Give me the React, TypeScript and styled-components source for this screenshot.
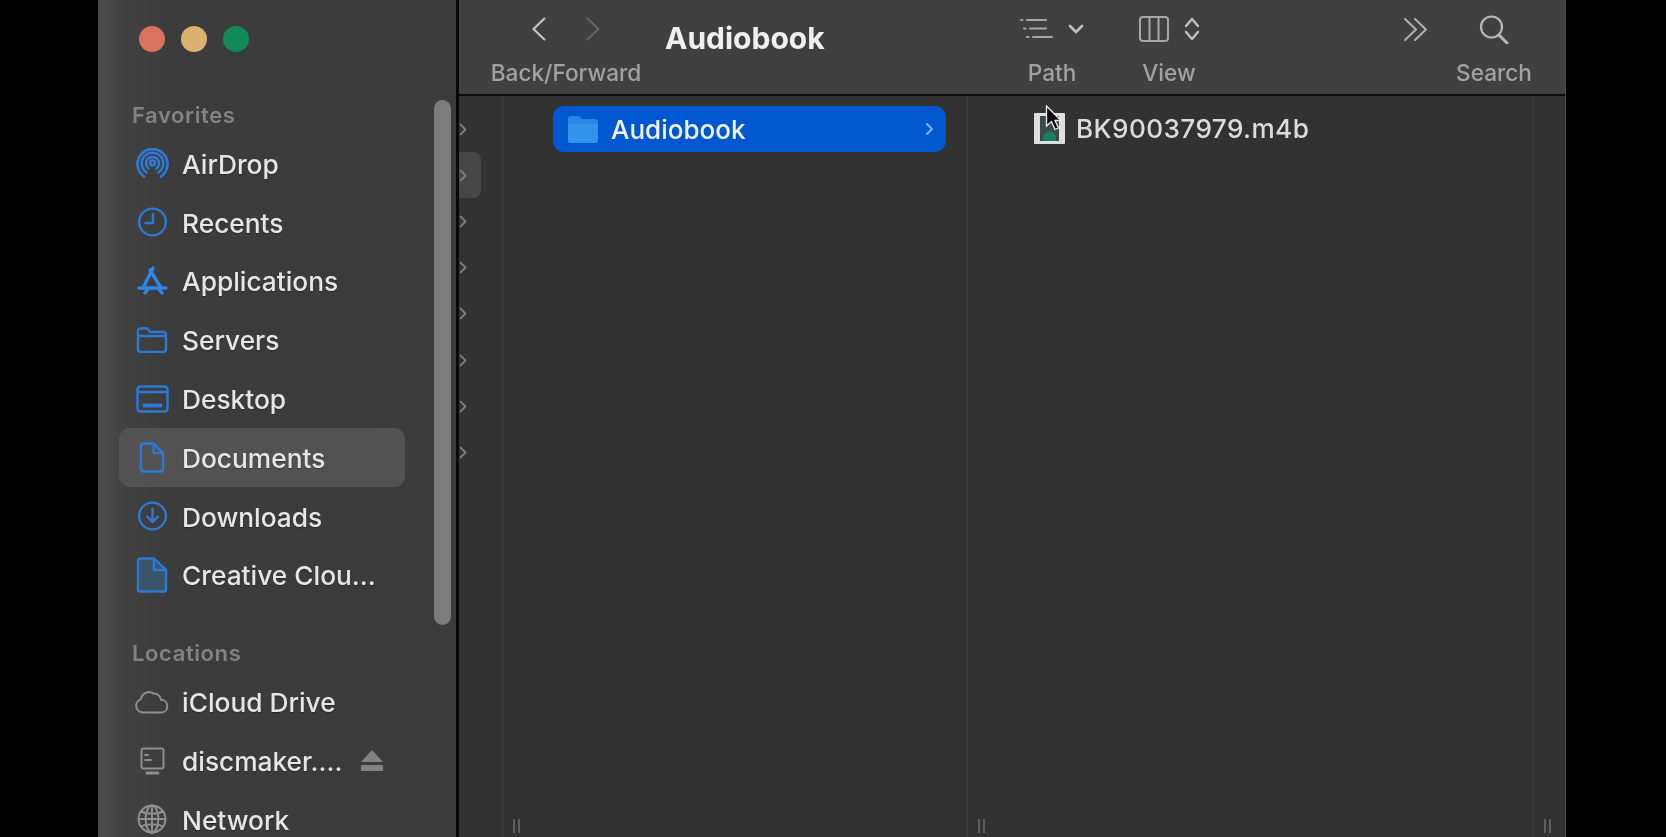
import styled, { createGlobalStyle } from 'styled-components';
import { ReactNode } from 'react';

const GlobalStyle = createGlobalStyle`
  html, body {
    margin: 0;
    height: 100%;
    background: #000;
    overflow: hidden;
  }
  body {
    font-family: Inter, "Liberation Sans", sans-serif;
  }
`;

const Page = styled.div`
  width: 1666px;
  height: 837px;
  background: #000;
  padding-left: 98px;
  box-sizing: border-box;
  overflow: hidden;
`;

const Finder = styled.div`
  display: flex;
  width: 1467px;
  height: 837px;
  filter: blur(0.5px);
  border-right: 1px solid #4a4a4a;
`;

const Sidebar = styled.aside`
  position: relative;
  width: 361px;
  flex-shrink: 0;
  box-sizing: border-box;
  padding-left: 21px;
  overflow: hidden;
  background: linear-gradient(90deg, #4c4c4c 0, #414141 28px, #3c3c3c 70px, #3b3b3b 100%);
  border-right: 3px solid #0a0a0a;
`;

const Lights = styled.div`
  display: flex;
  gap: 16px;
  height: 94px;
  padding: 26px 0 0 20px;
  box-sizing: border-box;
`;

const Light = styled.span<{ $color: string }>`
  width: 26px;
  height: 26px;
  border-radius: 50%;
  background: ${(p) => p.$color};
`;

const SectionTitle = styled.div<{ $gap?: number }>`
  height: 40px;
  line-height: 42px;
  margin-top: ${(p) => p.$gap ?? 0}px;
  padding-left: 13px;
  font-size: 22px;
  font-weight: 600;
  letter-spacing: 0.6px;
  color: #838383;
`;

const Row = styled.div<{ $active?: boolean }>`
  display: flex;
  align-items: center;
  width: 286px;
  height: 58.8px;
  box-sizing: border-box;
  padding-left: 9px;
  border-radius: 11px;
  background: ${(p) => (p.$active ? '#525252' : 'transparent')};
`;

const IconCell = styled.span`
  display: flex;
  align-items: center;
  justify-content: center;
  width: 48px;
  margin-right: 6px;
  flex-shrink: 0;
`;

const RowLabel = styled.span`
  padding-top: 2px;
  font-size: 26.3px;
  font-weight: 500;
  color: #e6e6e6;
  white-space: nowrap;
  text-shadow: 0 1px 1px rgba(0, 0, 0, 0.35);
`;

const Eject = styled.svg`
  margin-left: auto;
  margin-right: 21px;
`;

const ScrollThumb = styled.div`
  position: absolute;
  left: 336px;
  top: 100px;
  width: 17px;
  height: 525px;
  border-radius: 9px;
  background: #7c7c7c;
`;

const Main = styled.main`
  flex: 1;
  display: flex;
  flex-direction: column;
  min-width: 0;
  background: #323232;
`;

const Toolbar = styled.header`
  display: flex;
  height: 96px;
  flex-shrink: 0;
  box-sizing: border-box;
  padding-left: 32px;
  background: #404040;
  border-bottom: 2px solid #0c0c0c;
`;

const ToolGroup = styled.div<{ $width: number; $gap?: number }>`
  display: flex;
  flex-direction: column;
  align-items: center;
  width: ${(p) => p.$width}px;
  margin-left: ${(p) => p.$gap ?? 0}px;
  flex-shrink: 0;
`;

const ToolIcons = styled.div<{ $gap?: number }>`
  display: flex;
  align-items: center;
  justify-content: center;
  gap: ${(p) => p.$gap ?? 0}px;
  height: 58px;
`;

const ToolLabel = styled.div`
  font-size: 22.6px;
  line-height: 30px;
  font-weight: 500;
  color: #a2a2a2;
  white-space: nowrap;
`;

const Title = styled.h1`
  margin: 17px 0 0 24px;
  width: 160px;
  flex-shrink: 0;
  font-size: 30px;
  line-height: 42px;
  font-weight: 700;
  color: #f0f0f0;
  white-space: nowrap;
`;

const Columns = styled.div`
  flex: 1;
  display: flex;
  min-height: 0;
`;

const Column = styled.section<{ $width: number; $last?: boolean }>`
  position: relative;
  width: ${(p) => p.$width}px;
  flex-shrink: 0;
  box-sizing: border-box;
  border-right: ${(p) => (p.$last ? 'none' : '1px solid #3f3f3f')};
`;

const NarrowList = styled.div`
  padding-top: 10px;
`;

const NarrowRow = styled.div<{ $active?: boolean }>`
  display: flex;
  align-items: center;
  width: 22px;
  height: 46.2px;
  box-sizing: border-box;
  border-radius: 0 8px 8px 0;
  background: ${(p) => (p.$active ? '#474747' : 'transparent')};
`;

const SelectedRow = styled.div`
  display: flex;
  align-items: center;
  width: 393px;
  height: 46px;
  margin: 10px 0 0 50px;
  box-sizing: border-box;
  padding: 0 12px 0 15px;
  border-radius: 11px;
  background: #0058d0;
`;

const SelectedLabel = styled.span`
  margin-left: 13px;
  font-size: 26px;
  font-weight: 500;
  color: #f2f2f2;
`;

const RowChevron = styled.svg`
  margin-left: auto;
`;

const FileRow = styled.div`
  position: relative;
  display: flex;
  align-items: center;
  height: 46px;
  margin-top: 9px;
  padding-left: 66px;
`;

const FileLabel = styled.span`
  margin-left: 11px;
  font-size: 26.2px;
  font-weight: 500;
  letter-spacing: 0.4px;
  color: #dcdcdc;
  white-space: nowrap;
`;

const Cursor = styled.svg`
  position: absolute;
  left: 77px;
  top: 0;
`;

const Grip = styled.div`
  position: absolute;
  left: 10px;
  bottom: 4px;
  width: 7px;
  height: 14px;
  box-sizing: border-box;
  border-left: 2px solid #5e5e5e;
  border-right: 2px solid #5e5e5e;
`;

const blue = '#2d7ad6';
const grey = '#8f8f8f';

function Line({ children, width, height, color = blue, sw = 2.4 }: { children: ReactNode; width: number; height: number; color?: string; sw?: number }) {
  return (
    <svg width={width} height={height} viewBox={`0 0 ${width} ${height}`} fill="none" stroke={color} strokeWidth={sw} strokeLinecap="round" strokeLinejoin="round">
      {children}
    </svg>
  );
}

const AirDropIcon = () => (
  <Line width={33} height={30} sw={2.6}>
    <path d="M8 28.500A15 15 0 1 1 25 28.500" />
    <path d="M10.500 24.500A10.800 10.800 0 1 1 22.500 24.500" />
    <path d="M12.500 20.500A6.500 6.500 0 1 1 20.500 20.500" />
    <circle cx="16.500" cy="15" r="2.400" />
  </Line>
);

const ClockIcon = () => (
  <Line width={30} height={30}>
    <circle cx="15.500" cy="15" r="13.400" />
    <path d="M16 7v9H8.500" />
  </Line>
);

const AppsIcon = () => (
  <Line width={31} height={29} color="#2f86e6" sw={3.4}>
    <path d="M16 2 6 22" />
    <path d="M13 4l11 18" />
    <path d="M2 22h27" />
    <path d="M8 27l3-4" />
    <path d="M25 27l-3-4" />
  </Line>
);

const FolderIcon = () => (
  <Line width={32} height={26}>
    <path d="M2 6V4a2.500 2.500 0 0 1 2.500-2.500h7L14 5h13.500A2.500 2.500 0 0 1 30 7.500v15a2.500 2.500 0 0 1-2.500 2.500h-23A2.500 2.500 0 0 1 2 22.500Z" />
    <path d="M2 9h28" />
  </Line>
);

const DesktopIcon = () => (
  <Line width={33} height={28}>
    <rect x="1.500" y="1.500" width="30" height="25" rx="3" />
    <path d="M2 7h29" />
    <path d="M7 20.500h19" strokeWidth="4" strokeLinecap="butt" />
  </Line>
);

const DocIcon = ({ width, height, fill }: { width: number; height: number; fill?: string }) => (
  <Line width={width} height={height}>
    <path
      d={`M2 3.500A2 2 0 0 1 4 1.500H${width * 0.56}L${width - 2} ${height * 0.36}V${height - 3.5}A2 2 0 0 1 ${width - 4} ${height - 1.5}H4A2 2 0 0 1 2 ${height - 3.5}Z`}
      fill={fill}
    />
    <path d={`M${width * 0.56} 2V${height * 0.36}H${width - 2.5}`} />
  </Line>
);

const DownloadIcon = () => (
  <Line width={30} height={30}>
    <circle cx="15.500" cy="15" r="13.400" />
    <path d="M15.500 8v13M10 15.500l5.500 5.500 5.500-5.500" />
  </Line>
);

const CloudIcon = () => (
  <Line width={36} height={24} color={grey} sw={2}>
    <path d="M8.500 22.500A6.800 6.800 0 0 1 7 9.200 8 8 0 0 1 19.500 3.600 7.200 7.200 0 0 1 27 9.800 6.400 6.400 0 0 1 28 22.500Z" />
  </Line>
);

const ComputerIcon = () => (
  <Line width={25} height={28} color={grey} sw={2}>
    <rect x="1.500" y="1.500" width="22" height="20" rx="2" />
    <path d="M5 8h3M5 13h6" />
    <path d="M7 26h11" strokeWidth="3" />
  </Line>
);

const GlobeIcon = () => (
  <Line width={30} height={30} color={grey} sw={2}>
    <circle cx="15" cy="15" r="13.400" />
    <ellipse cx="15" cy="15" rx="6.400" ry="13.400" />
    <path d="M15 1.600v26.800M1.600 15h26.800M4 7.500c6 3 16 3 22 0M4 22.500c6-3 16-3 22 0" />
  </Line>
);

const Chevron = ({ dir, color, size = 24 }: { dir: 'left' | 'right'; color: string; size?: number }) => (
  <svg width={size * 0.58} height={size} viewBox="0 0 14 24" fill="none" stroke={color} strokeWidth="2.200" strokeLinecap="round" strokeLinejoin="round">
    <path d={dir === 'left' ? 'M12.500 1.500 1.500 12l11 10.500' : 'M1.500 1.500 12.500 12l-11 10.500'} />
  </svg>
);

const SmallChevron = () => (
  <svg width="8" height="13" viewBox="0 0 8 13" fill="none" stroke="#7d7d7d" strokeWidth="1.800" strokeLinecap="round" strokeLinejoin="round">
    <path d="M1.500 1.500 6.500 6.500l-5 5" />
  </svg>
);

const favorites: { label: string; icon: ReactNode; active?: boolean }[] = [
  { label: 'AirDrop', icon: <AirDropIcon /> },
  { label: 'Recents', icon: <ClockIcon /> },
  { label: 'Applications', icon: <AppsIcon /> },
  { label: 'Servers', icon: <FolderIcon /> },
  { label: 'Desktop', icon: <DesktopIcon /> },
  { label: 'Documents', icon: <DocIcon width={26} height={31} />, active: true },
  { label: 'Downloads', icon: <DownloadIcon /> },
  { label: 'Creative Clou...', icon: <DocIcon width={32} height={36} fill="#3b5568" /> },
];

export default function App() {
  return (
    <Page>
      <GlobalStyle />
      <Finder>
        <Sidebar>
          <Lights>
            <Light $color="#d9735c" />
            <Light $color="#dcb271" />
            <Light $color="#0f8a58" />
          </Lights>
          <SectionTitle>Favorites</SectionTitle>
          {favorites.map((item) => (
            <Row key={item.label} $active={item.active}>
              <IconCell>{item.icon}</IconCell>
              <RowLabel>{item.label}</RowLabel>
            </Row>
          ))}
          <SectionTitle $gap={28}>Locations</SectionTitle>
          <Row>
            <IconCell>
              <CloudIcon />
            </IconCell>
            <RowLabel>iCloud Drive</RowLabel>
          </Row>
          <Row>
            <IconCell>
              <ComputerIcon />
            </IconCell>
            <RowLabel>discmaker....</RowLabel>
            <Eject width="24" height="22" viewBox="0 0 24 22" fill="#838383">
              <path d="M12 0 23 12H1Z" />
              <rect x="1" y="15" width="22" height="6" />
            </Eject>
          </Row>
          <Row>
            <IconCell>
              <GlobeIcon />
            </IconCell>
            <RowLabel>Network</RowLabel>
          </Row>
          <ScrollThumb />
        </Sidebar>

        <Main>
          <Toolbar>
            <ToolGroup $width={150}>
              <ToolIcons $gap={40}>
                <Chevron dir="left" color="#c4c4c4" />
                <Chevron dir="right" color="#666" />
              </ToolIcons>
              <ToolLabel>Back/Forward</ToolLabel>
            </ToolGroup>
            <Title>Audiobook</Title>
            <ToolGroup $width={90} $gap={182}>
              <ToolIcons $gap={15}>
                <svg width="33" height="22" viewBox="0 0 33 22" fill="none" stroke="#a8a8a8" strokeWidth="2" strokeLinecap="round">
                  <path d="M1 2h1.500M7 2h19M4 10.500h1.500M10 10.500h16M7 19h1.500M13 19h19" />
                </svg>
                <svg width="16" height="10" viewBox="0 0 16 10" fill="none" stroke="#c0c0c0" strokeWidth="2.600" strokeLinecap="round" strokeLinejoin="round">
                  <path d="M2 2l6 6 6-6" />
                </svg>
              </ToolIcons>
              <ToolLabel>Path</ToolLabel>
            </ToolGroup>
            <ToolGroup $width={90} $gap={27}>
              <ToolIcons $gap={15}>
                <svg width="30" height="26" viewBox="0 0 30 26" fill="none" stroke="#a8a8a8" strokeWidth="2">
                  <rect x="1" y="1" width="28" height="24" rx="3" />
                  <path d="M10.500 1v24M19.500 1v24" />
                </svg>
                <svg width="16" height="24" viewBox="0 0 16 24" fill="none" stroke="#c0c0c0" strokeWidth="2.400" strokeLinecap="round" strokeLinejoin="round">
                  <path d="M2 9l6-7 6 7M2 15l6 7 6-7" />
                </svg>
              </ToolIcons>
              <ToolLabel>View</ToolLabel>
            </ToolGroup>
            <ToolGroup $width={40} $gap={181}>
              <ToolIcons>
                <svg width="25" height="25" viewBox="0 0 25 25" fill="none" stroke="#b0b0b0" strokeWidth="2" strokeLinecap="round" strokeLinejoin="round">
                  <path d="M2 2l11 10.500L2 23M12 2l11 10.500L12 23" />
                </svg>
              </ToolIcons>
            </ToolGroup>
            <ToolGroup $width={80} $gap={19}>
              <ToolIcons>
                <svg width="30" height="29" viewBox="0 0 30 29" fill="none" stroke="#b8b8b8" strokeWidth="2.200" strokeLinecap="round">
                  <circle cx="12.500" cy="12" r="10.500" />
                  <path d="M20 20l8 8" strokeWidth="3" />
                </svg>
              </ToolIcons>
              <ToolLabel>Search</ToolLabel>
            </ToolGroup>
          </Toolbar>

          <Columns>
            <Column $width={44}>
              <NarrowList>
                {Array.from({ length: 8 }, (_, i) => (
                  <NarrowRow key={i} $active={i === 1}>
                    <SmallChevron />
                  </NarrowRow>
                ))}
              </NarrowList>
            </Column>
            <Column $width={465}>
              <SelectedRow>
                <svg width="30" height="27" viewBox="0 0 30 27">
                  <path d="M0 3a3 3 0 0 1 3-3h8l3 3h13a3 3 0 0 1 3 3v18a3 3 0 0 1-3 3H3a3 3 0 0 1-3-3Z" fill="#2a86e2" />
                  <path d="M0 8h30v16a3 3 0 0 1-3 3H3a3 3 0 0 1-3-3Z" fill="#3293ea" />
                </svg>
                <SelectedLabel>Audiobook</SelectedLabel>
                <RowChevron width="9" height="14" viewBox="0 0 9 14" fill="none" stroke="#7db4f0" strokeWidth="2" strokeLinecap="round" strokeLinejoin="round">
                  <path d="M2 2l5 5-5 5" />
                </RowChevron>
              </SelectedRow>
              <Grip />
            </Column>
            <Column $width={566}>
              <FileRow>
                <svg width="31" height="31" viewBox="0 0 31 31">
                  <rect x="0" y="0" width="31" height="31" rx="1" fill="#dedede" />
                  <rect x="6" y="3" width="19" height="25" fill="#3d4a4a" />
                  <path d="M9 25a6.500 6.500 0 0 1 13 0Z" fill="#15805f" />
                  <rect x="9" y="25" width="13" height="3" fill="#15805f" />
                </svg>
                <FileLabel>BK90037979.m4b</FileLabel>
                <Cursor width="16" height="26" viewBox="0 0 16 26">
                  <path d="M1.500 1v20l5-4.500 3.500 8 3.500-1.500-3.500-7.500h6Z" fill="#0a0a0a" stroke="#f2f2f2" strokeWidth="1.300" />
                </Cursor>
              </FileRow>
              <Grip />
            </Column>
            <Column $width={27} $last>
              <Grip />
            </Column>
          </Columns>
        </Main>
      </Finder>
    </Page>
  );
}
